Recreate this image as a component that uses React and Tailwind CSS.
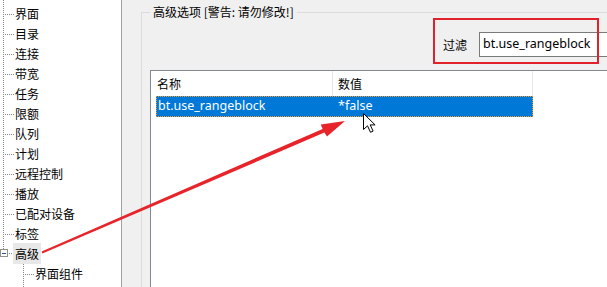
import React from 'react';

const cjk = "font-['Noto_Sans_CJK_SC','Noto_Sans',sans-serif]";
const latin = "font-['Noto_Sans','Noto_Sans_CJK_SC',sans-serif]";

const items = ['界面', '目录', '连接', '带宽', '任务', '限额', '队列', '计划', '远程控制', '播放', '已配对设备', '标签'];

const Dots = ({ x1, y1, x2, y2 }) => (
    <line x1={x1} y1={y1} x2={x2} y2={y2} stroke="#8a8a8a" strokeWidth="1" strokeDasharray="1 1" />
);

const TreeItem = ({ label }) => (
    <div className="h-5 flex items-center">
        <svg width="14" height="20" className="shrink-0">
            <Dots x1="3.5" y1="0" x2="3.5" y2="20" />
            <Dots x1="5" y1="10.5" x2="14" y2="10.5" />
        </svg>
        <span className="ml-px leading-4">{label}</span>
    </div>
);

const Tree = () => (
    <div className={`w-[122px] shrink-0 bg-white border-r border-[#a0a0a0] text-black ${cjk}`}>
        <svg width="14" height="4" className="block">
            <Dots x1="3.5" y1="0" x2="3.5" y2="4" />
        </svg>
        {items.map(label => <TreeItem key={label} label={label} />)}
        <div className="h-5 flex items-center">
            <svg width="13" height="20" className="shrink-0">
                <Dots x1="3.5" y1="0" x2="3.5" y2="5" />
                <rect x="0.5" y="5.5" width="7" height="7" fill="white" stroke="#919191" />
                <line x1="2" y1="9.5" x2="6" y2="9.5" stroke="#2d4f8f" />
                <Dots x1="9" y1="9.5" x2="13" y2="9.5" />
            </svg>
            <span className="h-[21px] -mt-px px-[2px] bg-[#e8e8e8] flex items-center leading-4">高级</span>
        </div>
        <div className="h-[23px] flex items-start">
            <svg width="35" height="23" className="shrink-0">
                <Dots x1="23.5" y1="0" x2="23.5" y2="23" />
                <Dots x1="25" y1="10.5" x2="34" y2="10.5" />
            </svg>
            <span className="h-5 flex items-center leading-4">界面组件</span>
        </div>
    </div>
);

const App = () => {
    return (
        <div className="relative w-[607px] h-[287px] overflow-hidden flex bg-[#f0f0f0] text-[12px] text-black">
            <Tree />

            <div className="flex-1 min-w-0 pt-[4px] pl-[19px]">
                <fieldset className="w-[520px] h-[320px] border-l border-t border-[#dcdcdc] pl-[8px]">
                    <legend className={`px-[3px] leading-4 ${cjk}`}>高级选项 [警告: 请勿修改!]</legend>

                    <div className="mt-[12px] h-[25px] flex items-center gap-[12px] pl-[293px]">
                        <span className={cjk}>过滤</span>
                        <div className={`w-[140px] h-[25px] shrink-0 border border-[#7a7a7a] bg-white pl-[3px] flex items-center text-[12.5px] ${latin}`}>
                            bt.use_rangeblock
                        </div>
                    </div>

                    <div className="mt-[13px] h-[240px] border-t border-l border-[#828790] bg-white">
                        <div className={`h-[25px] flex ${cjk}`}>
                            <div className="w-[182px] pl-[6px] border-r border-[#e5e5e5] flex items-center">名称</div>
                            <div className="w-[200px] pl-[5px] border-r border-[#e5e5e5] flex items-center">数值</div>
                        </div>
                        <div className="pl-[5px]">
                            <div className={`w-[377px] h-[21px] flex items-center bg-[#0078d7] border border-dotted border-[#f39a2b] text-white text-[12.5px] ${latin}`}>
                                <div className="w-[176px] pl-px">bt.use_rangeblock</div>
                                <div className="pl-[5px]">*false</div>
                            </div>
                        </div>
                    </div>
                </fieldset>
            </div>

            <svg className="absolute inset-0 pointer-events-none" width="607" height="287" viewBox="0 0 607 287">
                <rect x="434" y="19" width="164" height="44" fill="none" stroke="#e2222b" strokeWidth="2" />
                <polygon
                    points="42.4,253.4 41.6,251.6 322.6,128.9 320.8,124.6 345,121 327,136.5 324.4,132.6"
                    fill="#e8242b"
                />
                <path
                    d="M0 0 L0 16 L4 12.3 L7 18.8 L9.6 17.6 L6.7 11.4 L11.6 11.4 Z"
                    transform="translate(363.5 113.5)"
                    fill="white"
                    stroke="black"
                    strokeWidth="1"
                    strokeLinejoin="miter"
                />
            </svg>
        </div>
    );
};

export default App;
